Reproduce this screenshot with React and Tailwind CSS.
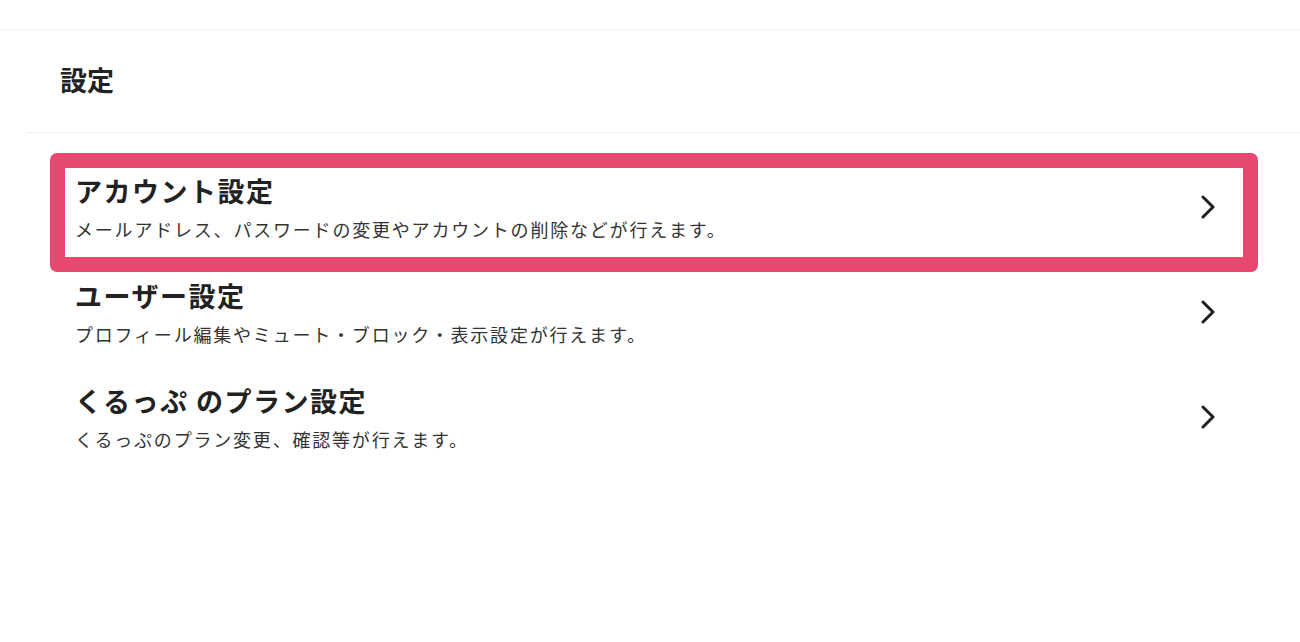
const items = [
  { title: 'アカウント設定', desc: 'メールアドレス、パスワードの変更やアカウントの削除などが行えます。' },
  { title: 'ユーザー設定', desc: 'プロフィール編集やミュート・ブロック・表示設定が行えます。' },
  { title: 'くるっぷ のプラン設定', desc: 'くるっぷのプラン変更、確認等が行えます。' },
];

const Chevron = () => (
  <svg width="16" height="24" viewBox="0 0 16 24" fill="none">
    <polyline points="3,2 13,12 3,22" stroke="#1f1f1f" strokeWidth="3" strokeLinecap="round" strokeLinejoin="round" />
  </svg>
);

export default function App() {
  return (
    <div className="min-h-[642px] w-[1300px] bg-white text-[#222] font-['Noto_Sans_CJK_JP','Noto_Sans',sans-serif]">
      {/* top bar */}
      <div className="h-[30px] border-b border-[#f1f1f1]" />

      {/* header */}
      <div className="h-[102px] flex items-center pl-[60px] pb-[3px]">
        <h1 className="text-[27px] font-bold leading-none text-[#222]">設定</h1>
      </div>
      <div className="ml-[26px] h-px bg-[#eeeeee]" />

      {/* list */}
      <div className="relative ml-[50px] w-[1208px] mt-[20px] pt-[1px]">
        {items.map((item) => (
          <div key={item.title} className="h-[105px] flex items-center justify-between pl-[25px] pr-[42px]">
            <div>
              <p className="text-[27px] font-bold leading-[36px] tracking-[1.5px] text-[#222]">{item.title}</p>
              <p className="mt-[8px] text-[18px] leading-[24px] tracking-[1.8px] text-[#333]">{item.desc}</p>
            </div>
            <Chevron />
          </div>
        ))}

        {/* highlight frame */}
        <div className="pointer-events-none absolute left-0 top-0 w-[1208px] h-[119px] border-[15px] border-[#e8486f] rounded-[7px]" />
      </div>
    </div>
  );
}
